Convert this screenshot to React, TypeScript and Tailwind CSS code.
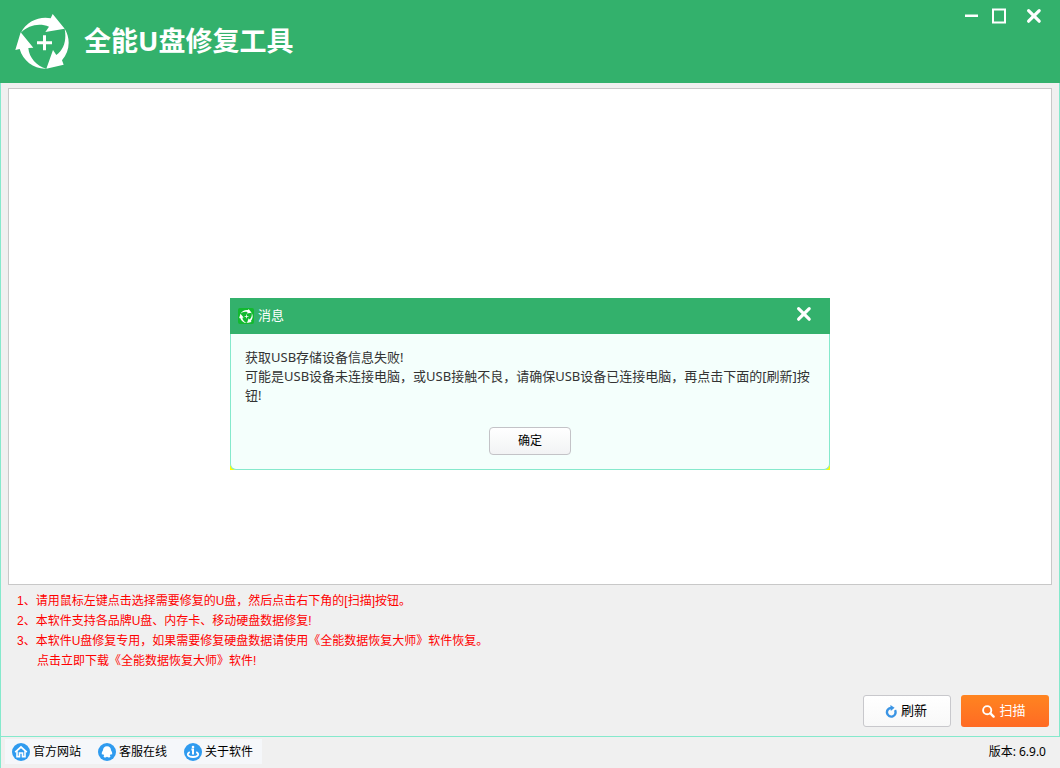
import React, { useState } from 'react';

// the three arrows around a plus, used in the header and in dialog titles
function RepairLogo({ className }: { className: string }) {
    return (
        <svg viewBox="30 24 165 165" className={className} fill="currentColor" aria-hidden="true">
            <path d="M48 80C64 46 104 30 137 37L143 24L179 68L121 78L132 62C102 50 70 58 48 80Z" />
            <path d="M179 68C197 97 195 135 171 163L176 176L124 188L144 132L154 147C178 130 185 100 179 68Z" />
            <path d="M124 188C88 190 54 165 44 129L31 132L47 79L85 125L70 126C72 155 95 180 124 188Z" />
            <path d="M114 88h9v18h18v9h-18v18h-9v-18h-18v-9h18z" />
        </svg>
    );
}

function CloseIcon() {
    return (
        <svg viewBox="0 0 16 16" className="size-4" stroke="currentColor" strokeWidth="3.2" strokeLinecap="round" aria-hidden="true">
            <path d="M2.6 2.6L13.2 13.2M13.2 2.6L2.6 13.2" />
        </svg>
    );
}

function HomeIcon() {
    return (
        <svg viewBox="0 0 18 18" className="size-[18px]" fill="none" aria-hidden="true">
            <circle cx="9" cy="9" r="9" fill="#2f9bef" />
            <path d="M3.2 9.2L9 4L14.8 9.2" stroke="#fff" strokeWidth="1.7" />
            <path d="M5 8.3V13.6H7.5V10H10.5V13.6H13V8.3" stroke="#fff" strokeWidth="1.6" />
        </svg>
    );
}

function ServiceIcon() {
    return (
        <svg viewBox="0 0 18 18" className="size-[18px]" aria-hidden="true">
            <circle cx="9" cy="9" r="9" fill="#2f9bef" />
            <path
                d="M9 3.2C6.4 3.2 5 4.9 5 7.2C4.2 8.6 3.4 10 3.9 11.5C4.3 11.6 4.7 11.4 5 11C5.3 11.6 5.7 12.2 6.2 12.6C5.4 13 5.3 14.3 6.6 14.4C7.8 14.4 8.5 14.1 9 13.7C9.5 14.1 10.2 14.4 11.4 14.4C12.7 14.3 12.6 13 11.8 12.6C12.3 12.2 12.7 11.6 13 11C13.3 11.4 13.7 11.6 14.1 11.5C14.6 10 13.8 8.6 13 7.2C13 4.9 11.6 3.2 9 3.2Z"
                fill="#fff"
            />
        </svg>
    );
}

function AboutIcon() {
    return (
        <svg viewBox="0 0 18 18" className="size-[18px]" fill="none" aria-hidden="true">
            <circle cx="9" cy="9" r="9" fill="#2f9bef" />
            <circle cx="9" cy="4" r="1.3" fill="#fff" />
            <path d="M7.4 6.6H9V11.6M9 6.6V11.6" stroke="#fff" strokeWidth="2" />
            <path d="M5.8 9.2C2.4 10.4 3.3 14 9 14C14.7 14 15.6 10.4 12.2 9.2" stroke="#fff" strokeWidth="1.8" />
        </svg>
    );
}

function RefreshIcon() {
    return (
        <svg viewBox="0 0 12 13" className="h-[13px] w-3" fill="none" aria-hidden="true">
            <path d="M6.2 3A4.3 4.3 0 1 0 10 5.2" stroke="#3a94e4" strokeWidth="2.4" />
            <path d="M5.4 0L9.6 2.8L5.8 6Z" fill="#3a94e4" />
        </svg>
    );
}

function SearchIcon() {
    return (
        <svg viewBox="0 0 13 13" className="size-[13px]" fill="none" stroke="currentColor" aria-hidden="true">
            <circle cx="5.2" cy="5.2" r="4.1" strokeWidth="1.9" />
            <path d="M8.4 8.4L11.6 11.6" strokeWidth="2.4" strokeLinecap="round" />
        </svg>
    );
}

const footerLinks = [
    { label: '官方网站', Icon: HomeIcon },
    { label: '客服在线', Icon: ServiceIcon },
    { label: '关于软件', Icon: AboutIcon },
];

const tips = [
    '1、请用鼠标左键点击选择需要修复的U盘，然后点击右下角的[扫描]按钮。',
    '2、本软件支持各品牌U盘、内存卡、移动硬盘数据修复!',
    '3、本软件U盘修复专用，如果需要修复硬盘数据请使用《全能数据恢复大师》软件恢复。',
];

function MessageDialog({ onClose }: { onClose: () => void }) {
    return (
        <div className="fixed inset-0 flex items-center justify-center">
            <div role="dialog" aria-labelledby="message-title" className="w-[600px] max-w-full bg-[#ffff00]">
                <div className="flex h-9 items-center bg-[#33b16c] pr-[18px] pl-2 text-white">
                    <span className="flex size-4 items-center justify-center rounded-xs bg-[#12b92f]">
                        <RepairLogo className="size-[14px]" />
                    </span>
                    <h2 id="message-title" className="ml-1 flex-1 text-[13px]">消息</h2>
                    <button type="button" aria-label="关闭" onClick={onClose} className="mb-1">
                        <CloseIcon />
                    </button>
                </div>
                <div className="flex flex-col items-center rounded-b-md border border-t-0 border-[#85e9cc] bg-[#f4fffc] p-[14px]">
                    <p className="w-full text-[13px] leading-[19px] text-[#333]">
                        获取USB存储设备信息失败!
                        <br />
                        可能是USB设备未连接电脑，或USB接触不良，请确保USB设备已连接电脑，再点击下面的[刷新]按钮!
                    </p>
                    <button
                        type="button"
                        onClick={onClose}
                        className="mt-[22px] h-7 w-[82px] rounded border border-[#c3c3c7] bg-linear-to-b from-white to-[#f2f3f4] text-xs text-black"
                    >
                        确定
                    </button>
                </div>
            </div>
        </div>
    );
}

export default function App() {
    const [showMessage, setShowMessage] = useState(true);

    return (
        <div className="flex min-h-screen flex-col bg-[#f0f0f0] font-['Noto_Sans','Noto_Sans_CJK_SC',sans-serif] text-black">
            <header className="flex h-[83px] items-start justify-between bg-[#33b16c] pr-[18px] pl-[15px] text-white">
                <div className="flex h-full items-center gap-[14px]">
                    <RepairLogo className="size-[55px]" />
                    <h1 className="text-[27px] font-bold">全能U盘修复工具</h1>
                </div>
                {/* window buttons */}
                <div className="flex items-center gap-3 pt-2">
                    <button type="button" aria-label="最小化">
                        <svg viewBox="0 0 16 16" className="size-4" fill="currentColor">
                            <path d="M3 6.5h13v2.5H3z" />
                        </svg>
                    </button>
                    <button type="button" aria-label="最大化">
                        <svg viewBox="0 0 16 16" className="size-4" fill="none" stroke="currentColor">
                            <path d="M3 1.5h12v13H3z" strokeWidth="2" />
                        </svg>
                    </button>
                    <button type="button" aria-label="关闭" className="ml-2">
                        <CloseIcon />
                    </button>
                </div>
            </header>

            <main className="flex flex-1 flex-col border-x border-b border-[#85e9cc] px-[7px] pt-[5px] pb-[9px]">
                {/* device list */}
                <section className="flex-1 border border-[#c8c8c8] bg-white" />

                <div className="mt-[6px] pl-[9px] font-['Liberation_Sans','Noto_Sans_CJK_SC',sans-serif] text-xs leading-5 text-[#ff0000]">
                    {tips.map((tip) => (
                        <p key={tip}>{tip}</p>
                    ))}
                    <a href="#download" className="ml-5 block">点击立即下载《全能数据恢复大师》软件!</a>
                </div>

                <div className="mt-6 flex justify-end gap-[10px] pr-[3px]">
                    <button
                        type="button"
                        onClick={() => setShowMessage(true)}
                        className="flex h-8 w-[88px] items-center justify-center gap-1 rounded-[3px] border border-[#c8c8cc] bg-linear-to-b from-white to-[#f8f8f8] pr-[2px] text-[13px]"
                    >
                        <RefreshIcon />
                        刷新
                    </button>
                    <button
                        type="button"
                        className="flex h-8 w-[88px] items-center justify-center gap-1 rounded-[3px] bg-linear-to-b from-[#ff8420] to-[#ff6a24] pr-[2px] text-[13px] text-white"
                    >
                        <SearchIcon />
                        扫描
                    </button>
                </div>
            </main>

            <footer className="flex h-[31px] items-center justify-between border-l border-[#85e9cc] pr-[14px] pb-[2px] pl-1 text-xs">
                <nav className="flex h-[25px] items-center gap-[17px] bg-[#f5f7fa] pr-[9px] pl-[7px]">
                    {footerLinks.map(({ label, Icon }) => (
                        <a key={label} href="#" className="flex items-center gap-[3px]">
                            <Icon />
                            {label}
                        </a>
                    ))}
                </nav>
                <span>版本: 6.9.0</span>
            </footer>

            {showMessage && <MessageDialog onClose={() => setShowMessage(false)} />}
        </div>
    );
}
